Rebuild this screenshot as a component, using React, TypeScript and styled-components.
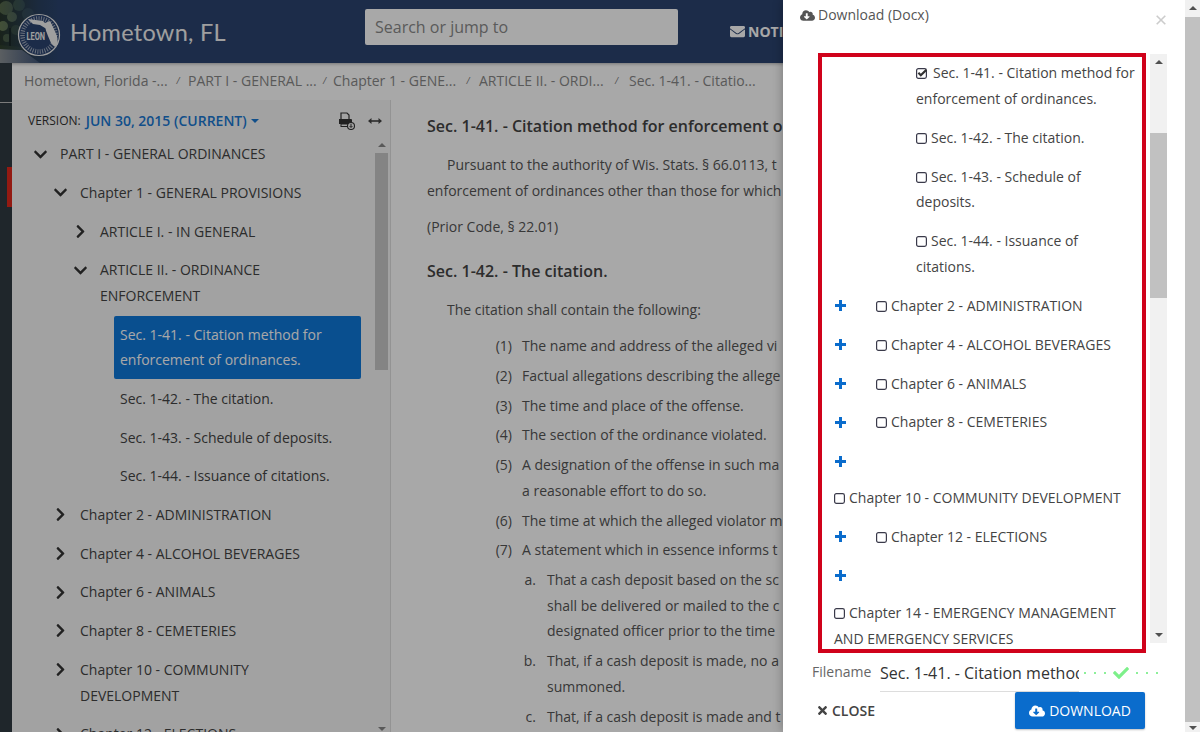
import * as React from "react";
import styled, { createGlobalStyle } from "styled-components";
import { FaCheck, FaChevronDown, FaChevronRight, FaCloudDownloadAlt, FaEnvelope, FaTimes } from "react-icons/fa";

const GlobalStyle = createGlobalStyle`
  html, body {
    margin: 0;
    height: 100%;
    overflow: hidden;
    background: #fff;
    font-family: "Open Sans", "Liberation Sans", sans-serif;
    font-size: 14px;
    color: #444;
  }
`;

const Page = styled.div`
  display: flex;
  width: 1200px;
  height: 732px;
  overflow: hidden;
`;

const Viewport = styled.div`
  position: relative;
  display: flex;
  flex-direction: column;
  width: 1185px;
  height: 732px;
  overflow: hidden;
`;

const Backdrop = styled.div`
  position: absolute;
  inset: 0;
  z-index: 1;
  background: rgba(0, 0, 0, 0.34);
`;

/* header */
const Header = styled.header`
  display: flex;
  align-items: center;
  flex: none;
  height: 63px;
  background: #2b4470;
  box-shadow: 0 1px 3px rgba(0, 0, 0, 0.3);
`;

const SiteTitle = styled.div`
  flex: none;
  width: 156px;
  margin-top: 1px;
  font-family: Lato, "Open Sans", sans-serif;
  font-size: 23.5px;
  letter-spacing: 0.3px;
  color: #f2f2f2;
  white-space: nowrap;
`;

const SearchBox = styled.div`
  flex: none;
  align-self: flex-start;
  width: 303px;
  height: 36px;
  margin: 9px 0 0 139px;
  padding-left: 10px;
  line-height: 36px;
  border-radius: 2px;
  background: #fff;
  font-size: 16px;
  color: #8a8a8a;
`;

const Notifications = styled.div`
  display: flex;
  align-items: center;
  gap: 3px;
  margin-left: 52px;
  font-size: 14px;
  font-weight: 700;
  color: #fff;
  white-space: nowrap;
`;

/* body of the page */
const Body = styled.div`
  display: flex;
  flex: 1;
  min-height: 0;
`;

const Rail = styled.div`
  display: flex;
  flex-direction: column;
  flex: none;
  width: 12px;
  padding-top: 39px;
  box-sizing: border-box;
  background: #2f3a42;
`;

const RailLine = styled.div`
  height: 1px;
  background: #bbb;
`;

const RailMark = styled.div`
  align-self: flex-end;
  width: 5px;
  height: 40px;
  margin-top: 64px;
  background: #e0281c;
`;

const Main = styled.div`
  display: flex;
  flex-direction: column;
  flex: 1;
  min-width: 0;
`;

const Breadcrumbs = styled.nav`
  display: flex;
  align-items: center;
  flex: none;
  height: 37px;
  padding: 0 0 2px 12px;
  box-sizing: border-box;
  color: #888;
  white-space: nowrap;
`;

const Crumb = styled.span<{ $width: number }>`
  flex: none;
  width: ${p => p.$width}px;
`;

const CrumbSlash = styled.span<{ $width: number }>`
  flex: none;
  width: ${p => p.$width}px;
  font-size: 9px;
  font-style: italic;
  text-align: center;
  color: #777;
`;

const Columns = styled.div`
  display: flex;
  flex: 1;
  min-height: 0;
`;

/* left tree */
const Sidebar = styled.aside`
  display: flex;
  flex-direction: column;
  flex: none;
  width: 378px;
  border-right: 1px solid #e0e0e0;
  background: #f6f6f6;
`;

const VersionBar = styled.div`
  display: flex;
  align-items: center;
  flex: none;
  height: 41.2px;
  padding: 0 8px 0 16px;
  box-sizing: border-box;
`;

const VersionLabel = styled.span`
  font-size: 12px;
  font-weight: 500;
  color: #333;
`;

const VersionLink = styled.span`
  display: flex;
  align-items: center;
  gap: 4px;
  margin-left: 5px;
  font-size: 14px;
  font-weight: 600;
  color: #1a78d2;
`;

const Caret = styled.span`
  width: 0;
  height: 0;
  border-left: 4px solid transparent;
  border-right: 4px solid transparent;
  border-top: 4px solid #1a78d2;
`;

const VersionTools = styled.div`
  display: flex;
  align-items: center;
  gap: 12px;
  margin-left: auto;
  color: #444;
`;

const SidebarBody = styled.div`
  display: flex;
  flex: 1;
  min-height: 0;
  padding-right: 2px;
`;

const Tree = styled.div`
  flex: 1;
  min-width: 0;
  overflow: hidden;
`;

const TreeRow = styled.div<{ $level: number }>`
  display: flex;
  margin-bottom: 13px;
  padding: 0 14px 0 ${p => 20 + p.$level * 20}px;
  line-height: 25.68px;
  color: #444;
`;

const Chevron = styled.span`
  display: flex;
  align-items: center;
  flex: none;
  width: 28px;
  height: 25.68px;
  font-size: 15px;
  color: #333;
`;

const ChevronBox = styled.span`
  display: flex;
  justify-content: center;
  width: 16px;
`;

const TreeLabel = styled.div`
  flex: 1;
  min-width: 0;
`;

const LeafLabel = styled.div<{ $active?: boolean }>`
  flex: 1;
  margin: ${p => (p.$active ? "-6px 0 -6px -6px" : "0")};
  padding: ${p => (p.$active ? "6px" : "0")};
  border-radius: 2px;
  background: ${p => (p.$active ? "#0f78da" : "transparent")};
  color: ${p => (p.$active ? "#fff" : "inherit")};
`;

/* scrollbars, all the same parts */
const ScrollTrack = styled.div<{ $width: number; $bg: string; $height?: number; $top?: number }>`
  display: flex;
  flex-direction: column;
  align-items: center;
  flex: none;
  width: ${p => p.$width}px;
  ${p => (p.$height ? `height: ${p.$height}px;` : "")}
  margin-top: ${p => p.$top ?? 0}px;
  background: ${p => p.$bg};
`;

const ScrollArrow = styled.span<{ $down?: boolean; $color: string; $edge: number }>`
  flex: none;
  width: 0;
  height: 0;
  margin: ${p => (p.$down ? "0" : `${p.$edge}px`)} 0 ${p => (p.$down ? `${p.$edge}px` : "0")};
  border-left: 4px solid transparent;
  border-right: 4px solid transparent;
  ${p => (p.$down ? "border-top" : "border-bottom")}: 4px solid ${p => p.$color};
`;

const ScrollThumb = styled.div<{ $top: number; $height: number; $color: string }>`
  flex: none;
  align-self: stretch;
  height: ${p => p.$height}px;
  margin-top: ${p => p.$top}px;
  background: ${p => p.$color};
`;

const ScrollRest = styled.div`
  flex: 1;
`;

/* document, ends where the panel starts */
const Content = styled.main`
  flex: none;
  width: 356px;
  padding: 13px 0 0 36px;
  overflow: hidden;
  line-height: 25.67px;
  color: #555;
  white-space: nowrap;
`;

const SectionTitle = styled.h2<{ $top?: number }>`
  margin: ${p => p.$top ?? 0}px 0 13px;
  font-size: 16px;
  line-height: 26px;
  font-weight: 600;
  color: #444;
`;

const Para = styled.p`
  margin: 0 0 10.4px;
`;

const TextLine = styled.span<{ $indent?: boolean }>`
  display: block;
  padding-left: ${p => (p.$indent ? "20px" : "0")};
`;

const Clause = styled.div<{ $sub?: boolean }>`
  display: flex;
  gap: ${p => (p.$sub ? "11px" : "10px")};
  margin-bottom: 4.1px;
  padding-left: ${p => (p.$sub ? "80px" : "60px")};
`;

const ClauseMark = styled.span<{ $sub?: boolean }>`
  flex: none;
  width: ${p => (p.$sub ? "29px" : "25px")};
  text-align: right;
`;

/* download panel */
const Modal = styled.section`
  position: absolute;
  top: 0;
  right: 0;
  z-index: 2;
  display: flex;
  flex-direction: column;
  width: 402px;
  height: 732px;
  background: #fff;
  box-shadow: 0 0 10px rgba(0, 0, 0, 0.3);
`;

const ModalHead = styled.div`
  display: flex;
  flex: none;
  height: 53px;
  padding: 5px 19px 0 17px;
  box-sizing: border-box;
  line-height: 20px;
  color: #555;
`;

const ModalTitle = styled.div`
  display: flex;
  align-items: center;
  gap: 3px;
  height: 20px;
`;

const CloseCross = styled.svg`
  flex: none;
  margin: 10px 0 0 auto;
`;

const ModalMiddle = styled.div`
  display: flex;
  flex: none;
  gap: 4px;
  height: 600px;
  margin-left: 35px;
`;

const RedBox = styled.div`
  flex: none;
  width: 328px;
  padding: 3px 0 0 12px;
  box-sizing: border-box;
  border: 4px solid #d0021b;
  overflow: hidden;
  line-height: 25.85px;
  color: #444;
`;

const CheckItem = styled.div<{ $deep?: boolean; $gap?: number }>`
  margin-bottom: ${p => p.$gap ?? 13}px;
  padding-left: ${p => (p.$deep ? "82px" : "0")};
  white-space: nowrap;
`;

const PlusSlot = styled.span<{ $alone?: boolean }>`
  display: ${p => (p.$alone ? "flex" : "inline-flex")};
  align-items: center;
  width: 42px;
  height: 25.85px;
  padding-left: 1px;
  box-sizing: border-box;
  vertical-align: top;
`;

const TickIcon = styled.svg<{ $checked?: boolean }>`
  margin-right: ${p => (p.$checked ? "6px" : "4px")};
  vertical-align: -1px;
`;

const FilenameRow = styled.div`
  display: flex;
  align-items: center;
  flex: none;
  height: 39px;
  padding-left: 29px;
`;

const FilenameLabel = styled.span`
  flex: none;
  width: 68px;
  margin-bottom: 3px;
  color: #666;
`;

const FilenameInput = styled.div`
  flex: none;
  width: 199px;
  height: 39px;
  overflow: hidden;
  border-bottom: 1px solid #ddd;
  box-sizing: border-box;
  font-size: 16px;
  line-height: 40px;
  color: #333;
  white-space: nowrap;
`;

const SavedMark = styled.div`
  display: flex;
  align-items: center;
  gap: 7px;
  margin-left: 5px;
  color: #7df08a;
`;

const SavedDots = styled.span`
  display: flex;
  gap: 8px;
`;

const SavedDot = styled.span`
  width: 2px;
  height: 2px;
  background: #8df09a;
`;

const ModalFooter = styled.div`
  display: flex;
  align-items: center;
  justify-content: space-between;
  flex: none;
  height: 37px;
  padding: 0 40px 0 33px;
`;

const CloseAction = styled.span`
  display: flex;
  align-items: center;
  gap: 3px;
  font-size: 14px;
  font-weight: 600;
  color: #444;
`;

const DownloadButton = styled.button`
  display: flex;
  align-items: center;
  justify-content: center;
  gap: 4px;
  width: 130px;
  height: 37px;
  padding: 0;
  border: 0;
  border-radius: 2px;
  background: #0a6ccc;
  box-shadow: 0 1px 2px rgba(0, 0, 0, 0.25);
  font-family: inherit;
  font-size: 14px;
  color: #fff;
`;

// no raster images here, so the header photo and seal are a small drawing
const HeaderPhoto: React.FC = () => (
  <svg width="70" height="63" viewBox="0 0 70 63" style={{ flex: "none", display: "block" }}>
    <defs>
      <linearGradient id="fade" x1="0" x2="1" y1="0" y2="0">
        <stop offset="0" stopColor="#2b4470" stopOpacity="0" />
        <stop offset="0.55" stopColor="#2b4470" stopOpacity="0.75" />
        <stop offset="0.85" stopColor="#2b4470" />
      </linearGradient>
    </defs>
    <rect width="70" height="63" fill="#26352a" />
    <circle cx="6" cy="8" r="7" fill="#55684a" />
    <circle cx="19" cy="5" r="6" fill="#435a40" />
    <circle cx="12" cy="17" r="5" fill="#5f7350" />
    <circle cx="3" cy="26" r="5" fill="#667a54" />
    <circle cx="16" cy="30" r="5" fill="#3b4e36" />
    <circle cx="28" cy="14" r="6" fill="#3c5040" />
    <circle cx="7" cy="38" r="4" fill="#4d6044" />
    <rect x="9" y="28" width="2" height="20" fill="#172117" />
    <rect x="22" y="22" width="2" height="24" fill="#162016" />
    <path d="M0 49 L22 50 L40 63 L0 63 Z" fill="#8a9094" />
    <path d="M0 45 L22 47 L26 50 L0 49 Z" fill="#2f402c" />
    <rect width="70" height="63" fill="url(#fade)" />
    <circle cx="39" cy="35" r="20.5" fill="#2b4470" stroke="#f0f0f0" strokeWidth="1.2" />
    <circle cx="39" cy="35" r="16.5" fill="none" stroke="#f0f0f0" strokeWidth="4.5" strokeDasharray="1 1.4" opacity="0.6" />
    <path d="M28 19 L43 21 L45 23 L50 21 L53 27 L57 36 L58 44 L55 47 L51 43 L48 36 L45 28 L40 25 L33 24 Z" fill="#f2f2f2" />
    <rect x="25.5" y="28.5" width="20" height="12.5" fill="#2b4470" />
    <text x="26.5" y="39.5" fontFamily="Roboto, sans-serif" fontSize="11" fontWeight="700" fill="#f2f2f2" textLength="18.5" lengthAdjust="spacingAndGlyphs">
      LEON
    </text>
  </svg>
);

const PrintGlyph: React.FC = () => (
  <svg width="18" height="18" viewBox="0 0 18 18" style={{ display: "block" }}>
    <path d="M3 7V1h6l2 2v4" fill="#f6f6f6" stroke="#333" strokeWidth="1.2" />
    <path d="M1 7h12a1 1 0 0 1 1 1v4H1z" fill="#333" />
    <rect x="3" y="12" width="8" height="2.5" fill="#f6f6f6" stroke="#333" strokeWidth="1" />
    <circle cx="13" cy="14" r="3.5" fill="#f6f6f6" stroke="#333" strokeWidth="1.1" />
    <path d="M13 11.8v3.4M11.6 14l1.4 1.5 1.4-1.5" fill="none" stroke="#333" strokeWidth="1" />
  </svg>
);

const WidthGlyph: React.FC = () => (
  <svg width="14" height="8" viewBox="0 0 14 8" style={{ display: "block" }}>
    <path d="M3 3.2h8v1.6H3z" fill="#444" />
    <path d="M3.5 1v6L0 4zM10.5 1v6L14 4z" fill="#444" />
  </svg>
);

const PlusGlyph: React.FC = () => (
  <svg width="11" height="11" viewBox="0 0 11 11" style={{ display: "block" }}>
    <path d="M4 0h3v4h4v3H7v4H4V7H0V4h4z" fill="#0a6ccc" />
  </svg>
);

const Box: React.FC<{ checked?: boolean }> = ({ checked }) => (
  <TickIcon $checked={checked} width="11" height="11" viewBox="0 0 11 11">
    <rect x="0.6" y="0.6" width="9.8" height="9.8" rx="1.8" fill="none" stroke="#3a3a4a" strokeWidth="1.2" />
    {checked && <path d="M2.4 4.8 L4.8 7.2 L10.4 1.8" fill="none" stroke="#333" strokeWidth="2.2" />}
  </TickIcon>
);

const TreeItem: React.FC<{ level: number; open?: boolean; children: React.ReactNode }> = ({ level, open, children }) => (
  <TreeRow $level={level}>
    <Chevron>
      <ChevronBox>{open ? <FaChevronDown /> : <FaChevronRight />}</ChevronBox>
    </Chevron>
    <TreeLabel>{children}</TreeLabel>
  </TreeRow>
);

const Leaf: React.FC<{ active?: boolean; children: React.ReactNode }> = ({ active, children }) => (
  <TreeRow $level={3}>
    <Chevron />
    <LeafLabel $active={active}>{children}</LeafLabel>
  </TreeRow>
);

const Scrollbar: React.FC<{ arrow: string; thumb: string; top: number; height: number; upEdge: number; downEdge: number }> = ({
  arrow,
  thumb,
  top,
  height,
  upEdge,
  downEdge,
}) => (
  <>
    <ScrollArrow $color={arrow} $edge={upEdge} />
    <ScrollThumb $color={thumb} $top={top} $height={height} />
    <ScrollRest />
    <ScrollArrow $down $color={arrow} $edge={downEdge} />
  </>
);

const chapters = ["Chapter 2 - ADMINISTRATION", "Chapter 4 - ALCOHOL BEVERAGES", "Chapter 6 - ANIMALS", "Chapter 8 - CEMETERIES"];

const App: React.FC = () => {
  return (
    <Page>
      <GlobalStyle />
      <Viewport>
        <Header>
          <HeaderPhoto />
          <SiteTitle>Hometown, FL</SiteTitle>
          <SearchBox>Search or jump to</SearchBox>
          <Notifications>
            <FaEnvelope size={15} />
            NOTI
          </Notifications>
        </Header>
        <Body>
          <Rail>
            <RailLine />
            <RailMark />
          </Rail>
          <Main>
            <Breadcrumbs>
              <Crumb $width={144}>Hometown, Florida -...</Crumb>
              <CrumbSlash $width={20}>/</CrumbSlash>
              <Crumb $width={128}>PART I - GENERAL ...</Crumb>
              <CrumbSlash $width={17}>/</CrumbSlash>
              <Crumb $width={124}>Chapter 1 - GENE...</Crumb>
              <CrumbSlash $width={22}>/</CrumbSlash>
              <Crumb $width={125}>ARTICLE II. - ORDI...</Crumb>
              <CrumbSlash $width={25}>/</CrumbSlash>
              <Crumb $width={127}>Sec. 1-41. - Citatio...</Crumb>
            </Breadcrumbs>
            <Columns>
              <Sidebar>
                <VersionBar>
                  <VersionLabel>VERSION:</VersionLabel>
                  <VersionLink>
                    JUN 30, 2015 (CURRENT)
                    <Caret />
                  </VersionLink>
                  <VersionTools>
                    <PrintGlyph />
                    <WidthGlyph />
                  </VersionTools>
                </VersionBar>
                <SidebarBody>
                  <Tree>
                    <TreeItem level={0} open>PART I - GENERAL ORDINANCES</TreeItem>
                    <TreeItem level={1} open>Chapter 1 - GENERAL PROVISIONS</TreeItem>
                    <TreeItem level={2}>ARTICLE I. - IN GENERAL</TreeItem>
                    <TreeItem level={2} open>ARTICLE II. - ORDINANCE ENFORCEMENT</TreeItem>
                    <Leaf active>
                      Sec. 1-41. - Citation method for
                      <br />
                      enforcement of ordinances.
                    </Leaf>
                    <Leaf>Sec. 1-42. - The citation.</Leaf>
                    <Leaf>Sec. 1-43. - Schedule of deposits.</Leaf>
                    <Leaf>Sec. 1-44. - Issuance of citations.</Leaf>
                    <TreeItem level={1}>Chapter 2 - ADMINISTRATION</TreeItem>
                    <TreeItem level={1}>Chapter 4 - ALCOHOL BEVERAGES</TreeItem>
                    <TreeItem level={1}>Chapter 6 - ANIMALS</TreeItem>
                    <TreeItem level={1}>Chapter 8 - CEMETERIES</TreeItem>
                    <TreeItem level={1}>
                      Chapter 10 - COMMUNITY
                      <br />
                      DEVELOPMENT
                    </TreeItem>
                    <TreeItem level={1}>Chapter 12 - ELECTIONS</TreeItem>
                  </Tree>
                  <ScrollTrack $width={13} $bg="transparent">
                    <Scrollbar arrow="#888" thumb="#c8c8c8" top={6} height={217} upEdge={2} downEdge={1} />
                  </ScrollTrack>
                </SidebarBody>
              </Sidebar>
              <Content>
                <SectionTitle>Sec. 1-41. - Citation method for enforcement o</SectionTitle>
                <Para>
                  <TextLine $indent>Pursuant to the authority of Wis. Stats. § 66.0113, t</TextLine>
                  <TextLine>enforcement of ordinances other than those for which</TextLine>
                </Para>
                <Para>(Prior Code, § 22.01)</Para>
                <SectionTitle $top={18.6}>Sec. 1-42. - The citation.</SectionTitle>
                <Para>
                  <TextLine $indent>The citation shall contain the following:</TextLine>
                </Para>
                <Clause>
                  <ClauseMark>(1)</ClauseMark>
                  <div>The name and address of the alleged vi</div>
                </Clause>
                <Clause>
                  <ClauseMark>(2)</ClauseMark>
                  <div>Factual allegations describing the allege</div>
                </Clause>
                <Clause>
                  <ClauseMark>(3)</ClauseMark>
                  <div>The time and place of the offense.</div>
                </Clause>
                <Clause>
                  <ClauseMark>(4)</ClauseMark>
                  <div>The section of the ordinance violated.</div>
                </Clause>
                <Clause>
                  <ClauseMark>(5)</ClauseMark>
                  <div>
                    <TextLine>A designation of the offense in such ma</TextLine>
                    <TextLine>a reasonable effort to do so.</TextLine>
                  </div>
                </Clause>
                <Clause>
                  <ClauseMark>(6)</ClauseMark>
                  <div>The time at which the alleged violator m</div>
                </Clause>
                <Clause>
                  <ClauseMark>(7)</ClauseMark>
                  <div>A statement which in essence informs t</div>
                </Clause>
                <Clause $sub>
                  <ClauseMark $sub>a.</ClauseMark>
                  <div>
                    <TextLine>That a cash deposit based on the sc</TextLine>
                    <TextLine>shall be delivered or mailed to the c</TextLine>
                    <TextLine>designated officer prior to the time</TextLine>
                  </div>
                </Clause>
                <Clause $sub>
                  <ClauseMark $sub>b.</ClauseMark>
                  <div>
                    <TextLine>That, if a cash deposit is made, no a</TextLine>
                    <TextLine>summoned.</TextLine>
                  </div>
                </Clause>
                <Clause $sub>
                  <ClauseMark $sub>c.</ClauseMark>
                  <div>That, if a cash deposit is made and t</div>
                </Clause>
              </Content>
            </Columns>
          </Main>
        </Body>
        <Backdrop />
        <Modal>
          <ModalHead>
            <ModalTitle>
              <FaCloudDownloadAlt size={15} />
              Download (Docx)
            </ModalTitle>
            <CloseCross width="10" height="10" viewBox="0 0 10 10">
              <path d="M0.7 0.7 L9.3 9.3 M9.3 0.7 L0.7 9.3" stroke="#ccc" strokeWidth="1.6" fill="none" />
            </CloseCross>
          </ModalHead>
          <ModalMiddle>
            <RedBox>
              <CheckItem $deep>
                <Box checked />
                Sec. 1-41. - Citation method for
                <br />
                enforcement of ordinances.
              </CheckItem>
              <CheckItem $deep>
                <Box />
                Sec. 1-42. - The citation.
              </CheckItem>
              <CheckItem $deep>
                <Box />
                Sec. 1-43. - Schedule of
                <br />
                deposits.
              </CheckItem>
              <CheckItem $deep>
                <Box />
                Sec. 1-44. - Issuance of
                <br />
                citations.
              </CheckItem>
              {chapters.map(name => (
                <CheckItem key={name}>
                  <PlusSlot>
                    <PlusGlyph />
                  </PlusSlot>
                  <Box />
                  {name}
                </CheckItem>
              ))}
              <CheckItem $gap={11}>
                <PlusSlot $alone>
                  <PlusGlyph />
                </PlusSlot>
              </CheckItem>
              <CheckItem>
                <Box />
                Chapter 10 - COMMUNITY DEVELOPMENT
              </CheckItem>
              <CheckItem>
                <PlusSlot>
                  <PlusGlyph />
                </PlusSlot>
                <Box />
                Chapter 12 - ELECTIONS
              </CheckItem>
              <CheckItem $gap={11}>
                <PlusSlot $alone>
                  <PlusGlyph />
                </PlusSlot>
              </CheckItem>
              <CheckItem>
                <Box />
                Chapter 14 - EMERGENCY MANAGEMENT
                <br />
                AND EMERGENCY SERVICES
              </CheckItem>
            </RedBox>
            <ScrollTrack $width={17} $bg="#f1f1f1" $height={589} $top={1}>
              <Scrollbar arrow="#505050" thumb="#c1c1c1" top={69} height={165} upEdge={6} downEdge={6} />
            </ScrollTrack>
          </ModalMiddle>
          <FilenameRow>
            <FilenameLabel>Filename</FilenameLabel>
            <FilenameInput>Sec. 1-41. - Citation method</FilenameInput>
            <SavedMark>
              <SavedDots>
                <SavedDot />
                <SavedDot />
                <SavedDot />
              </SavedDots>
              <FaCheck size={16} />
              <SavedDots>
                <SavedDot />
                <SavedDot />
                <SavedDot />
              </SavedDots>
            </SavedMark>
          </FilenameRow>
          <ModalFooter>
            <CloseAction>
              <FaTimes size={13} />
              CLOSE
            </CloseAction>
            <DownloadButton>
              <FaCloudDownloadAlt size={16} />
              DOWNLOAD
            </DownloadButton>
          </ModalFooter>
        </Modal>
      </Viewport>
      <ScrollTrack $width={15} $bg="#f1f1f1" $height={732}>
        <Scrollbar arrow="#505050" thumb="#c1c1c1" top={7} height={705} upEdge={6} downEdge={2} />
      </ScrollTrack>
    </Page>
  );
};

export default App;
